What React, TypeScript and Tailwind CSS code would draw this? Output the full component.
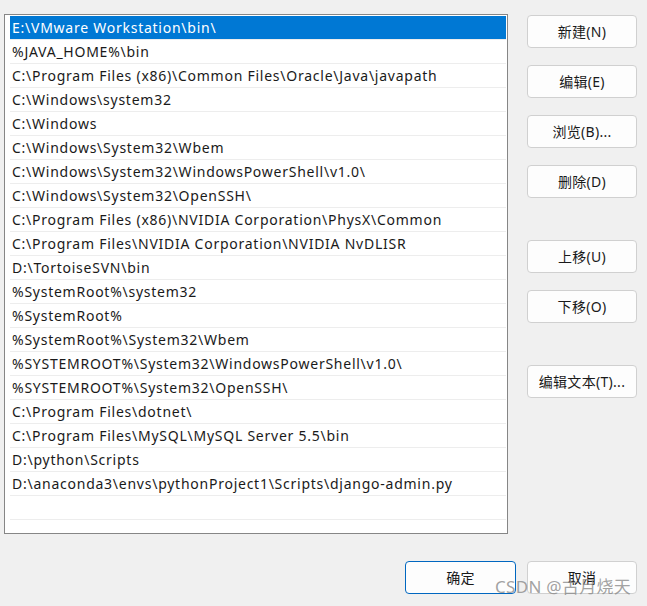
const paths = [
  "E:\\VMware Workstation\\bin\\",
  "%JAVA_HOME%\\bin",
  "C:\\Program Files (x86)\\Common Files\\Oracle\\Java\\javapath",
  "C:\\Windows\\system32",
  "C:\\Windows",
  "C:\\Windows\\System32\\Wbem",
  "C:\\Windows\\System32\\WindowsPowerShell\\v1.0\\",
  "C:\\Windows\\System32\\OpenSSH\\",
  "C:\\Program Files (x86)\\NVIDIA Corporation\\PhysX\\Common",
  "C:\\Program Files\\NVIDIA Corporation\\NVIDIA NvDLISR",
  "D:\\TortoiseSVN\\bin",
  "%SystemRoot%\\system32",
  "%SystemRoot%",
  "%SystemRoot%\\System32\\Wbem",
  "%SYSTEMROOT%\\System32\\WindowsPowerShell\\v1.0\\",
  "%SYSTEMROOT%\\System32\\OpenSSH\\",
  "C:\\Program Files\\dotnet\\",
  "C:\\Program Files\\MySQL\\MySQL Server 5.5\\bin",
  "D:\\python\\Scripts",
  "D:\\anaconda3\\envs\\pythonProject1\\Scripts\\django-admin.py",
  "",
];

const font = { fontFamily: '"Noto Sans", "Noto Sans CJK SC", sans-serif' };

function DlgButton({ label, primary }: { label: string; primary?: boolean }) {
  return (
    <button
      className={`w-[110px] h-[33px] rounded-[4px] bg-[#fdfdfd] text-[14px] tracking-[0.3px] text-[#1a1a1a] ${
        primary ? "border border-[#0067c0]" : "border border-[#d0d0d0]"
      }`}
    >
      {label}
    </button>
  );
}

export default function App() {
  return (
    <div className="w-[647px] h-[606px] bg-[#f0f0f0] relative overflow-hidden" style={font}>
      <div className="flex">
        <div className="ml-[4px] mt-[14px] w-[504px] h-[520px] border border-[#868686] bg-white pl-[5px] pr-[1px] pt-[1px] overflow-hidden">
          {paths.map((p, i) => (
            <div
              key={i}
              className={`h-[24px] pl-[2px] flex items-center text-[14px] tracking-[0.75px] whitespace-nowrap border-b border-[#ededed] ${
                i === 0 ? "bg-[#0078d4] text-white border-[#0078d4]" : "text-[#1a1a1a]"
              }`}
            >
              {p}
            </div>
          ))}
        </div>
        <div className="ml-[19px] mt-[15px] flex flex-col gap-[17px]">
          <DlgButton label="新建(N)" />
          <DlgButton label="编辑(E)" />
          <DlgButton label="浏览(B)..." />
          <DlgButton label="删除(D)" />
          <div className="mt-[25px] flex flex-col gap-[17px]">
            <DlgButton label="上移(U)" />
            <DlgButton label="下移(O)" />
          </div>
          <div className="mt-[25px]">
            <DlgButton label="编辑文本(T)..." />
          </div>
        </div>
      </div>
      <div className="flex justify-end gap-[11px] mt-[27px] pr-[10px]">
        <button className="w-[111px] h-[33px] rounded-[4px] bg-[#fdfdfd] text-[14px] tracking-[0.3px] text-[#1a1a1a] border border-[#0067c0]">
          确定
        </button>
        <DlgButton label="取消" />
      </div>
      <div className="absolute left-[495px] top-[578px] text-[17px] leading-none tracking-[0.3px] text-[#8a8a8a]/80 pointer-events-none">
        CSDN @古月烧天
      </div>
    </div>
  );
}
